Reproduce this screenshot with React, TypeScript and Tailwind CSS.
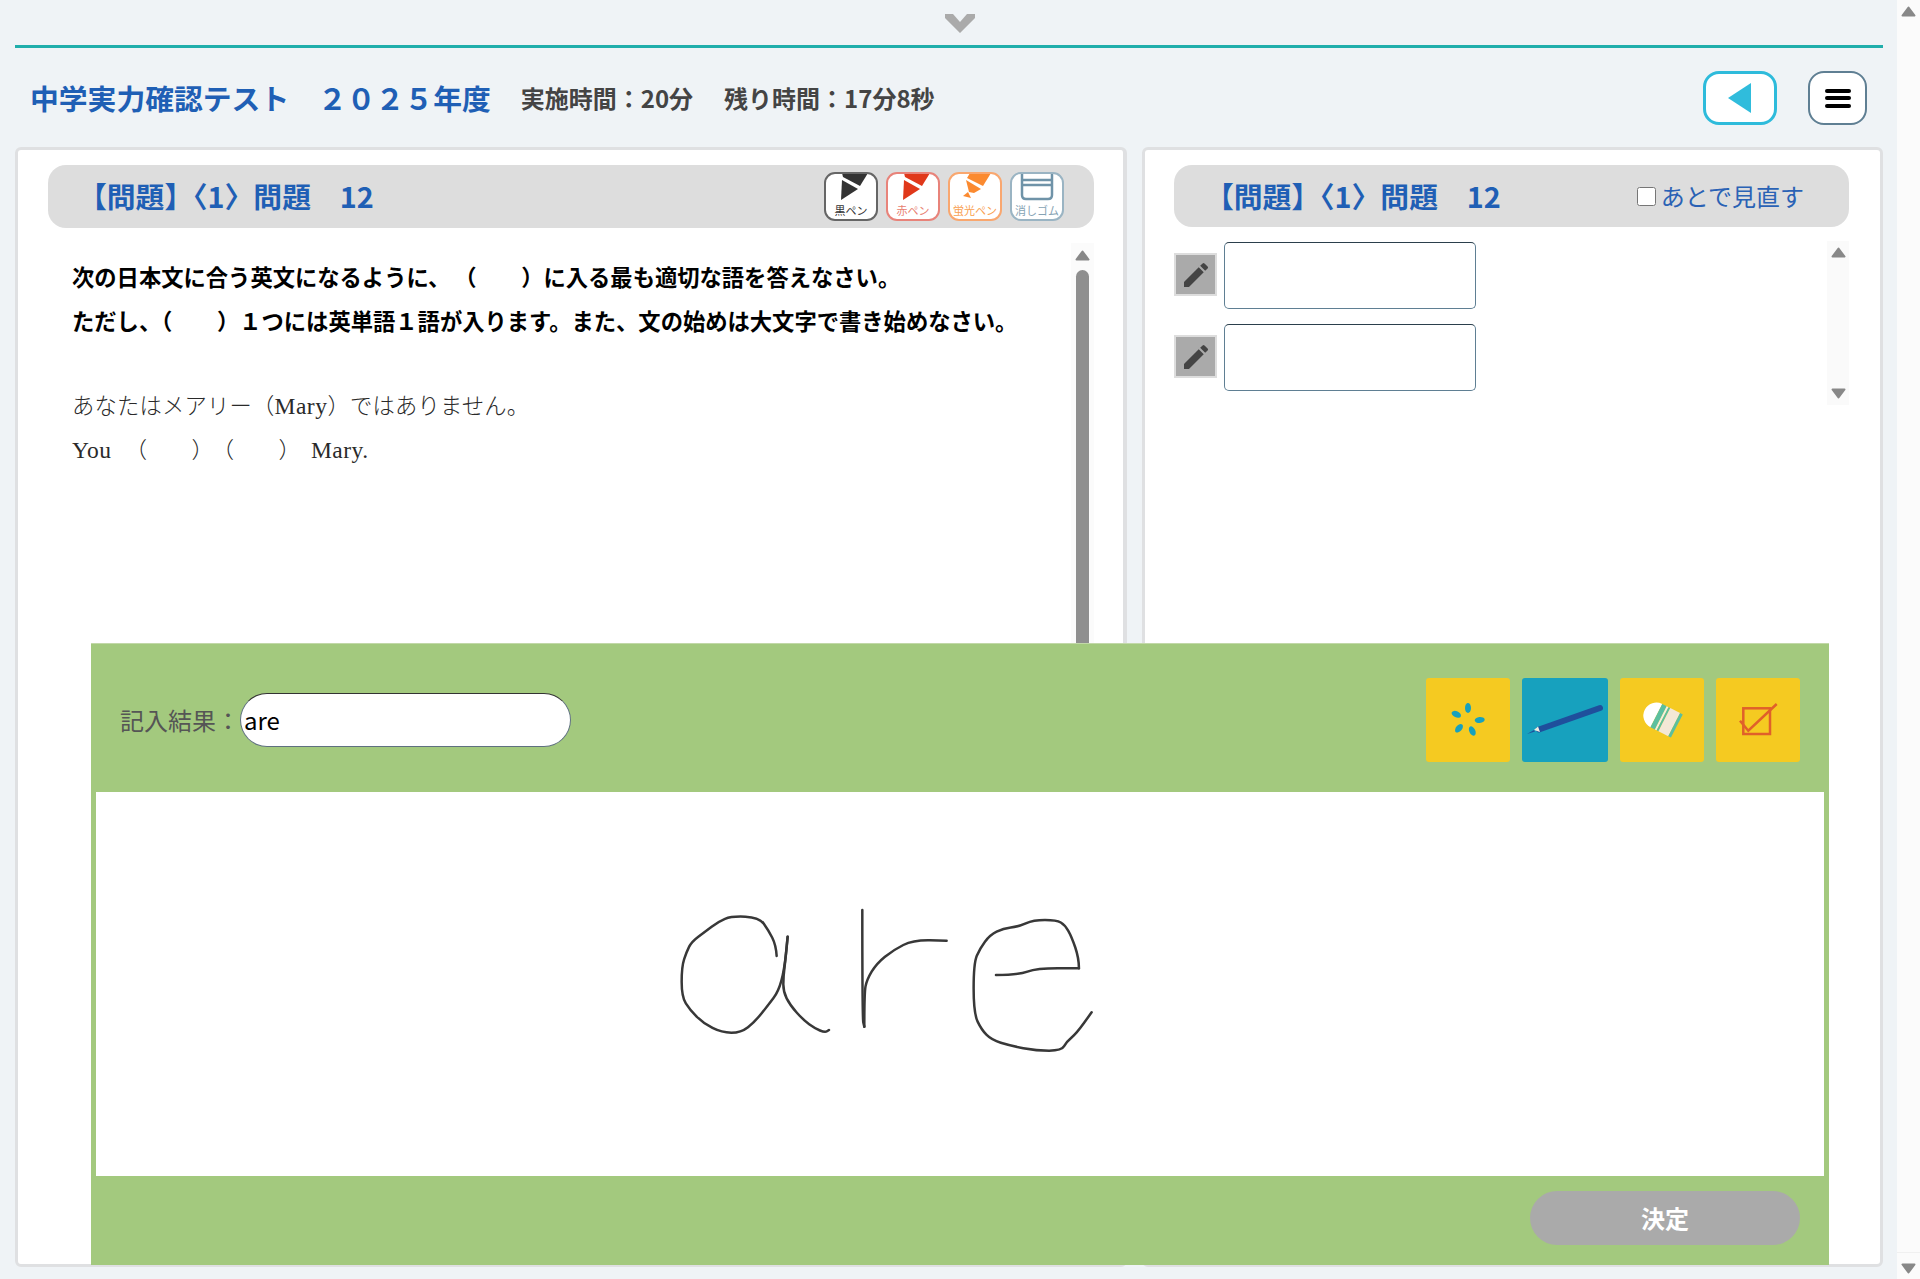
import { MdEdit } from 'react-icons/md';

type Point = [number, number];

// round the corners of a sampled pen stroke
function smooth(points: Point[]) {
  let d = `M${points[0][0]} ${points[0][1]}`;
  for (let i = 1; i < points.length - 1; i++) {
    const [x, y] = points[i];
    const [nx, ny] = points[i + 1];
    d += `Q${x} ${y} ${(x + nx) / 2} ${(y + ny) / 2}`;
  }
  const last = points[points.length - 1];
  return `${d}L${last[0]} ${last[1]}`;
}

const strokes: Point[][] = [
  [[410, 228], [408, 195], [385, 150], [358, 112], [275, 108], [235, 125], [195, 155], [155, 185], [140, 215], [125, 260], [125, 350], [150, 390], [190, 430], [245, 458], [303, 458], [345, 425], [385, 375], [415, 335], [433, 270], [443, 170]],
  [[443, 170], [437, 235], [430, 290], [430, 335], [450, 375], [490, 420], [525, 445], [555, 458], [567, 450]],
  [[667, 90], [667, 415], [673, 440]],
  [[673, 440], [673, 340], [680, 300], [710, 250], [760, 210], [820, 180], [920, 182]],
  [[1068, 285], [1135, 285], [1190, 265], [1317, 265]],
  [[1317, 265], [1317, 235], [1295, 170], [1275, 135], [1250, 120], [1180, 120], [1135, 140], [1090, 145], [1050, 165], [1020, 205], [1001, 250], [1001, 400], [1025, 450], [1055, 480], [1110, 497], [1190, 512], [1265, 512], [1280, 485], [1310, 460], [1355, 397]],
];

function Triangle({ down = false, className = '' }: { down?: boolean; className?: string }) {
  return (
    <svg width="15" height="11" viewBox="0 0 15 11" className={className}>
      <path
        d={down ? 'M1.5 1.5H13.5L7.5 9.5Z' : 'M7.5 1.5L13.5 9.5H1.5Z'}
        fill="#888888"
        stroke="#888888"
        strokeWidth="2"
        strokeLinejoin="round"
      />
    </svg>
  );
}

function PenButton({ label, border, text, children }: { label: string; border: string; text: string; children: React.ReactNode }) {
  return (
    <div className={`relative h-[49px] w-[54px] overflow-hidden rounded-[11px] border-2 bg-white ${border}`}>
      <svg viewBox="0 0 54 49" className="absolute -left-[2px] -top-[2px] h-[49px] w-[54px]">
        {children}
      </svg>
      <span className={`absolute -left-[2px] top-[28px] w-[54px] text-center text-[11px] leading-[16px] ${text}`}>{label}</span>
    </div>
  );
}

function PanelTitle({ className = '' }: { className?: string }) {
  return <h2 className={`text-[28.8px] font-bold leading-none text-[#1f5fb5] ${className}`}>【問題】〈1〉問題　12</h2>;
}

function PencilRow() {
  return (
    <div className="flex items-center gap-[7px]">
      <div className="mb-[2px] flex h-[43px] w-[43px] items-center justify-center border-2 border-[#dddddd] bg-[#aaaaaa]">
        <MdEdit size={32} className="text-[#444444]" />
      </div>
      <div className="h-[67px] w-[252px] rounded-[5px] border-[1.5px] border-[#5f7f93] border-t-[#2b3f4c] bg-white" />
    </div>
  );
}

function Handwriting() {
  return (
    <svg viewBox="96 792 1728 384" className="h-full w-full">
      <g transform="translate(640 880) scale(0.3333)" fill="none" stroke="#383838" strokeWidth="7.5" strokeLinejoin="round" strokeLinecap="round">
        {strokes.map((s, i) => (
          <path key={i} d={smooth(s)} />
        ))}
      </g>
    </svg>
  );
}

export default function App() {
  return (
    <div className="relative flex h-[1279px] overflow-hidden bg-[#eff3f6] font-['Noto_Sans_CJK_JP',sans-serif]">
      <div className="w-[1897px] pl-[15px] pr-[14px]">
        <div className="flex h-[45px] justify-center pl-[22px] pt-[13px]">
          <svg width="32" height="21" viewBox="0 0 32 21">
            <path d="M1 1H9L16 9L23 1H31V5L16 20L1 5Z" fill="#aaaaaa" />
          </svg>
        </div>
        <div className="h-[3px] bg-[#20aeab]" />

        <div className="flex h-[99px] items-center justify-between pl-[15px] pr-[16px]">
          <div className="flex items-center pt-[1px]">
            <h1 className="text-[28.8px] font-bold leading-none text-[#1f5fb5]">中学実力確認テスト　２０２５年度</h1>
            <span className="ml-[30px] text-[24px] font-bold leading-none text-[#444444]">実施時間：20分</span>
            <span className="ml-[31px] text-[24px] font-bold leading-none text-[#444444]">残り時間：17分8秒</span>
          </div>
          <div className="flex items-center gap-[31px] pt-[1px]">
            <button className="flex h-[54px] w-[74px] items-center justify-center rounded-[16px] border-[3px] border-[#2ebbdb] bg-white">
              <svg width="24" height="30" viewBox="0 0 24 30">
                <path d="M23 0V30L0 15Z" fill="#30bcdc" />
              </svg>
            </button>
            <button className="flex h-[54px] w-[59px] flex-col items-center justify-center gap-[3.5px] rounded-[16px] border-2 border-[#5f7f93] bg-white">
              <span className="h-[4px] w-[26px] rounded-full bg-black" />
              <span className="h-[4px] w-[26px] rounded-full bg-black" />
              <span className="h-[4px] w-[26px] rounded-full bg-black" />
            </button>
          </div>
        </div>

        <div className="flex h-[1120px] gap-[15px]">
          <section className="flex w-[1112px] flex-col rounded-md border-[3px] border-r-4 border-[#dfe0e2] bg-white pl-[30px] pr-[29px] pt-[15px]">
            <div className="flex h-[63px] items-center justify-between rounded-[18px] bg-[#dddddd] pl-[30px] pr-[30px]">
              <PanelTitle />
              <div className="flex gap-[8px]">
                <PenButton label="黒ペン" border="border-[#666666]" text="text-[#333333]">
                  <path d="M18 1H44L36 14L19 5Z" fill="#333333" />
                  <path d="M18 8L34 17L17 28Z" fill="#333333" />
                </PenButton>
                <PenButton label="赤ペン" border="border-[#e8837a]" text="text-[#e8806f]">
                  <path d="M18 1H44L36 14L19 5Z" fill="#e0381a" />
                  <path d="M18 8L34 17L17 28Z" fill="#e0381a" />
                </PenButton>
                <PenButton label="蛍光ペン" border="border-[#f9a76f]" text="text-[#f9a050]">
                  <path d="M22 1H43L35 14L19 6Z" fill="#fb8a30" />
                  <path d="M18 8L33 17L26 21L21 20Z" fill="#fb8a30" />
                  <path d="M15 24L20 20L23 26Z" fill="#fb8a30" />
                </PenButton>
                <PenButton label="消しゴム" border="border-[#9ab4c3]" text="text-[#86a3b4]">
                  <path d="M12 0V23Q12 27 16 27H38Q42 27 42 23V0M12 8H42M12 13H42" fill="none" stroke="#6f93a8" strokeWidth="2.5" />
                </PenButton>
              </div>
            </div>

            <div className="mt-[15px] flex min-h-0 flex-1">
              <div className="flex-1 pl-[24px] pt-[11px] text-[22.3px] leading-[44px]">
                <p className="font-bold text-black">
                  次の日本文に合う英文になるように、<span className="ml-[15px]">（　　）</span>に入る最も適切な語を答えなさい。
                </p>
                <p className="font-bold text-black">ただし、（　　）１つには英単語１語が入ります。また、文の始めは大文字で書き始めなさい。</p>
                <p className="mt-[40px] font-light tracking-[0.2px] text-[#2a2a2a]">
                  あなたはメアリー（<span className="font-['Liberation_Serif',serif] text-[23.5px] tracking-[0.5px]">Mary</span>）ではありません。
                </p>
                <p className="-mt-[2px] font-light text-[#2a2a2a]">
                  <span className="font-['Liberation_Serif',serif] text-[23.5px] tracking-[0.5px]">You</span>
                  <span className="ml-[13px]">（　　）</span>
                  <span className="ml-[9px]">（　　）</span>
                  <span className="ml-[10px] font-['Liberation_Serif',serif] text-[23.5px] tracking-[0.5px]">Mary.</span>
                </p>
              </div>
              <div className="flex w-[23px] flex-col items-center bg-[#fbfbfb] pt-[7px]">
                <Triangle />
                <div className="mt-[9px] w-[13px] flex-1 rounded-t-full bg-[#8f8f8f]" />
              </div>
            </div>
          </section>

          <section className="w-[741px] rounded-md border-[3px] border-[#dfe0e2] bg-white pl-[29px] pr-[31px] pt-[15px]">
            <div className="flex h-[62px] items-center justify-between rounded-[18px] bg-[#dddddd] pl-[31px] pr-[45px]">
              <PanelTitle />
              <label className="flex items-center gap-[5px] text-[24px] leading-none text-[#2a62b5]">
                <input type="checkbox" className="h-[19px] w-[19px]" />
                あとで見直す
              </label>
            </div>
            <div className="mt-[14px] flex justify-between">
              <div className="flex flex-col gap-[15px] pt-[1px]">
                <PencilRow />
                <PencilRow />
              </div>
              <div className="flex h-[164px] w-[22px] flex-col items-center justify-between bg-[#fafafa] py-[6px]">
                <Triangle />
                <Triangle down />
              </div>
            </div>
          </section>
        </div>
      </div>

      <aside className="flex w-[23px] flex-col items-center justify-between bg-[#fbfbfb]">
        <Triangle className="mt-[6px]" />
        <div className="flex h-[27px] w-full justify-center border-t border-[#f0f0f0] pt-[10px]">
          <Triangle down />
        </div>
      </aside>

      <div className="absolute left-[91px] top-[643px] flex h-[622px] w-[1738px] flex-col border-t border-[#c2d8a8] bg-[#a3c97e]">
        <div className="flex h-[148px] items-center justify-between pl-[29px] pr-[29px] pt-[4px]">
          <div className="flex items-center">
            <span className="w-[120px] text-[24px] leading-none text-[#555555]">記入結果：</span>
            <div className="flex h-[54px] w-[331px] items-center rounded-full border-[1.5px] border-[#5f7080] border-t-[#333333] bg-white pl-[3px] text-[24px] text-black">
              are
            </div>
          </div>
          <div className="flex gap-[12px]">
            <button className="h-[84px] w-[84px] rounded-[3px] bg-[#f5ca21]">
              <svg viewBox="0 0 84 84" className="h-full w-full" fill="#17a1be">
                <ellipse cx="42" cy="30" rx="3" ry="5" />
                <ellipse cx="30.3" cy="36.3" rx="3" ry="5" transform="rotate(-65 30.3 36.3)" />
                <ellipse cx="53.7" cy="42" rx="3" ry="5" transform="rotate(85 53.7 42)" />
                <ellipse cx="33" cy="50.3" rx="3" ry="5" transform="rotate(40 33 50.3)" />
                <ellipse cx="46.3" cy="53" rx="3" ry="5" transform="rotate(-25 46.3 53)" />
              </svg>
            </button>
            <button className="h-[84px] w-[86px] rounded-[3px] bg-[#17a1be]">
              <svg viewBox="0 0 86 84" className="h-full w-full">
                <path d="M17 51.5L78 30" stroke="#1f4f9c" strokeWidth="6" strokeLinecap="round" />
                <path d="M12 52L16 48.5L18 54Z" fill="#f0ece0" />
                <path d="M5 56L12 52L13 53.5Z" fill="#1f4f9c" />
              </svg>
            </button>
            <button className="h-[84px] w-[84px] rounded-[3px] bg-[#f5ca21]">
              <svg viewBox="0 0 84 84" className="h-full w-full">
                <g transform="translate(41.7 40.3) rotate(27)">
                  <path d="M-6 -13A13 13 0 0 0 -6 13Z" fill="#ffffff" />
                  <rect x="-6" y="-13" width="5" height="26" fill="#5bbf9f" />
                  <rect x="-1" y="-13" width="2" height="26" fill="#f3efe0" />
                  <rect x="1" y="-13" width="2" height="26" fill="#5bbf9f" />
                  <rect x="3" y="-13" width="11" height="26" fill="#f3e8d6" />
                  <rect x="14" y="-13" width="3" height="26" fill="#5bbf9f" />
                </g>
              </svg>
            </button>
            <button className="h-[84px] w-[84px] rounded-[3px] bg-[#f5ca21]">
              <svg viewBox="0 0 84 84" className="h-full w-full" fill="none" stroke="#e0602a" strokeWidth="2.5">
                <rect x="27.3" y="30.3" width="26.7" height="25.7" />
                <path d="M24 42.7L32.3 52.7L60.7 26" />
              </svg>
            </button>
          </div>
        </div>
        <div className="mx-[5px] h-[384px] bg-white">
          <Handwriting />
        </div>
        <div className="flex justify-end pr-[29px] pt-[15px]">
          <button className="h-[54px] w-[270px] rounded-full bg-[#aaaaaa] text-[24px] font-bold text-white">決定</button>
        </div>
      </div>
    </div>
  );
}
